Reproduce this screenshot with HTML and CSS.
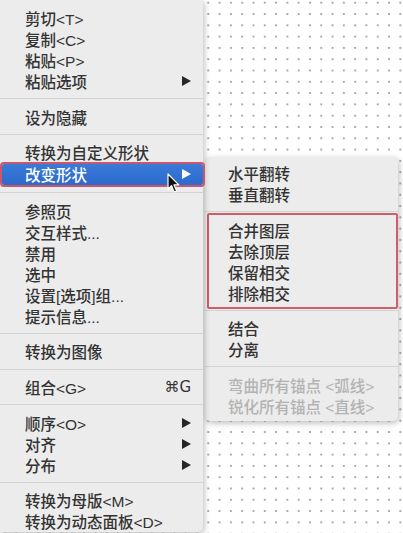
FILE: index.html
```html
<!DOCTYPE html>
<html lang="zh-CN">
<head>
    <meta charset="UTF-8">
    <meta name="viewport" content="width=device-width, initial-scale=1.0">
    <title>右键菜单</title>
    <link rel="stylesheet" href="styles.css">
</head>
<body>
    <div class="canvas">
        <div class="menu main">
            <div class="item">剪切&lt;T&gt;</div>
            <div class="item">复制&lt;C&gt;</div>
            <div class="item">粘贴&lt;P&gt;</div>
            <div class="item">粘贴选项<span class="arrow"></span></div>
            <div class="sep"></div>
            <div class="item">设为隐藏</div>
            <div class="sep"></div>
            <div class="item">转换为自定义形状</div>
            <div class="item active">改变形状<span class="arrow"></span></div>
            <div class="sep"></div>
            <div class="item">参照页</div>
            <div class="item">交互样式...</div>
            <div class="item">禁用</div>
            <div class="item">选中</div>
            <div class="item">设置[选项]组...</div>
            <div class="item">提示信息...</div>
            <div class="sep"></div>
            <div class="item">转换为图像</div>
            <div class="sep"></div>
            <div class="item">组合&lt;G&gt;<span class="key">⌘G</span></div>
            <div class="sep"></div>
            <div class="item">顺序&lt;O&gt;<span class="arrow"></span></div>
            <div class="item">对齐<span class="arrow"></span></div>
            <div class="item">分布<span class="arrow"></span></div>
            <div class="sep"></div>
            <div class="item">转换为母版&lt;M&gt;</div>
            <div class="item">转换为动态面板&lt;D&gt;</div>
        </div>

        <div class="menu sub">
            <div class="item">水平翻转</div>
            <div class="item">垂直翻转</div>
            <div class="sep"></div>
            <div class="marked">
                <div class="item">合并图层</div>
                <div class="item">去除顶层</div>
                <div class="item">保留相交</div>
                <div class="item">排除相交</div>
            </div>
            <div class="sep"></div>
            <div class="item">结合</div>
            <div class="item">分离</div>
            <div class="sep"></div>
            <div class="item disabled">弯曲所有锚点 &lt;弧线&gt;</div>
            <div class="item disabled">锐化所有锚点 &lt;直线&gt;</div>
        </div>

        <!-- mouse pointer over the hovered row -->
        <svg class="cursor" width="13" height="21" viewBox="0 0 13 21">
            <path d="M1 1 L1 16 L4.5 12.6 L7.2 19 L9.6 18 L7 11.8 L11.8 11.8 Z" fill="#111" stroke="#fff" stroke-width="1.2" stroke-linejoin="round"/>
        </svg>
    </div>
</body>
</html>
```

FILE: styles.css
```css
*{
    margin: 0;
    padding: 0;
    box-sizing: border-box;
}
body{
    font-family: "Liberation Sans", "Noto Sans CJK SC", sans-serif;
    font-size: 15.5px;
    font-weight: 500;
    color: #333;
}
.canvas{
    position: relative;
    display: flex;
    align-items: flex-start;
    width: 403px;
    height: 533px;
    overflow: hidden;
    background-color: #fff;
    background-image: radial-gradient(circle, #a8a8a8 0 0.9px, transparent 1.5px);
    background-size: 11.3px 11.3px;
    background-position: 202.65px -2.95px;
}
.menu{
    background: #ececec;
    box-shadow: 1px 2px 6px rgba(0, 0, 0, 0.28);
}
.main{
    flex: 0 0 203px;
    padding-top: 7.5px;
    border-radius: 0 0 5px 0;
    position: relative;
    z-index: 1;
}
.sub{
    flex: 0 0 193px;
    margin-top: 157px;
    margin-left: 2px;
    padding: 5.5px 0 4.5px;
    border-radius: 5px;
}
.item{
    display: flex;
    align-items: center;
    justify-content: space-between;
    height: 21px;
    padding: 0 12px 0 25px;
    white-space: nowrap;
}
.sub .item{
    padding-left: 23px;
}
.sep{
    height: 14.6px;
    display: flex;
    align-items: center;
}
.sep::before{
    content: "";
    flex: 1;
    height: 1px;
    background: #d3d3d3;
}
.arrow{
    width: 0;
    height: 0;
    border-left: 9px solid #262626;
    border-top: 5.5px solid transparent;
    border-bottom: 5.5px solid transparent;
}
.key{
    font-family: "DejaVu Sans", "Liberation Sans", sans-serif;
    font-size: 15px;
}
.active{
    margin: 1px 0 1px 2px;
    padding-left: 23px;
    padding-right: 12px;
    background: linear-gradient(#3a7ad8, #2c6acb);
    color: #fff;
    outline: 2px solid #c9566a;
    border-radius: 2px;
}
.active .arrow{
    border-left-color: #fff;
}
.disabled{
    color: #b3b3b3;
}
.marked{
    position: relative;
}
.marked::after{
    content: "";
    position: absolute;
    top: -6px;
    bottom: -6px;
    left: 2px;
    right: 0;
    border: 2px solid #cf5e6c;
    border-radius: 2px;
}
.cursor{
    position: absolute;
    left: 167px;
    top: 173px;
    z-index: 2;
}
```
